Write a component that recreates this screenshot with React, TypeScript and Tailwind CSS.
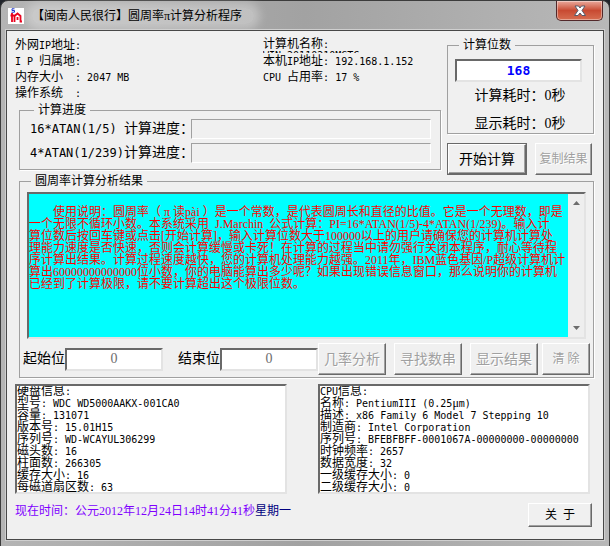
import type { InputHTMLAttributes, ButtonHTMLAttributes, ReactNode } from "react";

const MANUAL = `
　　使用说明：圆周率（ π 读pài ）是一个常数，是代表圆周长和直径的比值。它是一个无理数，即是
一个无限不循环小数。本系统采用  J.Marchin  公式计算：PI=16*ATAN(1/5)-4*ATAN(1/239)。输入计
算位数后按回车键或点击[开始计算]，输入计算位数大于100000以上的用户请确保您的计算机计算处
理能力速度是否快速，否则会计算缓慢或卡死！在计算的过程当中请勿强行关闭本程序，耐心等待程
序计算出结果。计算过程速度越快，您的计算机处理能力越强。2011年，IBM蓝色基因/P超级计算机计
算出60000000000000位小数，你的电脑能算出多少呢？如果出现错误信息窗口，那么说明你的计算机
已经到了计算极限，请不要计算超出这个极限位数。`;

const DISK_INFO = [
  "硬盘信息:",
  "型号: WDC WD5000AAKX-001CA0",
  "容量: 131071",
  "版本号: 15.01H15",
  "序列号: WD-WCAYUL306299",
  "磁头数: 16",
  "柱面数: 266305",
  "缓存大小: 16",
  "每磁道扇区数: 63",
];

const CPU_INFO = [
  "CPU信息:",
  "名称: PentiumIII (0.25μm)",
  "描述: x86 Family 6 Model 7 Stepping 10",
  "制造商: Intel Corporation",
  "序列号: BFEBFBFF-0001067A-00000000-00000000",
  "时钟频率: 2657",
  "数据宽度: 32",
  "一级缓存大小: 0",
  "二级缓存大小: 0",
];

// Latin runs are set half as wide as a Chinese character
function Mixed({ text, large = false }: { text: string; large?: boolean }) {
  return (
    <>
      {text.split(/([\x20-\x7e]+)/).map((part, i) =>
        i % 2 ? (
          <span
            key={i}
            className={
              large
                ? "font-['DejaVu_Sans_Mono',monospace] text-[12px] whitespace-pre"
                : "font-['DejaVu_Sans_Mono',monospace] text-[10px] whitespace-pre"
            }
          >
            {part}
          </span>
        ) : (
          part
        ),
      )}
    </>
  );
}

function Group({ title, className, children }: { title: string; className: string; children: ReactNode }) {
  return (
    <fieldset className={`min-w-0 border border-[#a0a0a0] shadow-[1px_1px_0_#fff] ${className}`}>
      <legend className="ml-1 bg-[#f0f0f0] px-1 leading-[14px]">{title}</legend>
      {children}
    </fieldset>
  );
}

function Button({ className, ...props }: ButtonHTMLAttributes<HTMLButtonElement>) {
  return (
    <button
      type="button"
      className={`shrink-0 border border-t-white border-l-white border-r-[#696969] border-b-[#696969] bg-[#f0f0f0] whitespace-pre shadow-[inset_-1px_-1px_0_#a0a0a0] disabled:text-[#a0a0a0] disabled:text-shadow-[1px_1px_0_#fff] ${className}`}
      {...props}
    />
  );
}

function Field({ className, ...props }: InputHTMLAttributes<HTMLInputElement>) {
  return (
    <input
      className={`min-w-0 border-2 border-t-[#696969] border-l-[#696969] border-r-[#e3e3e3] border-b-[#e3e3e3] bg-white text-center ${className}`}
      {...props}
    />
  );
}

function ProgressRow({ label }: { label: string }) {
  return (
    <div className="flex items-center">
      <span className="w-[161px] shrink-0 text-[14px] leading-5 whitespace-pre">
        <Mixed text={label} large />
      </span>
      <div
        role="progressbar"
        aria-label={label}
        aria-valuenow={0}
        className="h-5 flex-1 border border-t-[#a0a0a0] border-l-[#a0a0a0] border-r-white border-b-white"
      />
    </div>
  );
}

function InfoBox({ lines }: { lines: string[] }) {
  return (
    <ul className="h-[110px] w-[272px] overflow-hidden border-2 border-t-[#696969] border-l-[#696969] border-r-[#e3e3e3] border-b-[#e3e3e3] bg-white">
      {lines.map((line) => (
        <li key={line} className="h-3 leading-[11px] whitespace-pre">
          <Mixed text={line} />
        </li>
      ))}
    </ul>
  );
}

export default function App() {
  return (
    <div className="min-h-screen bg-[#20242a] font-['Liberation_Serif','Noto_Sans_CJK_SC',sans-serif] text-[12px] text-black">
      <div className="flex min-h-screen flex-col rounded-t-lg border border-[#3c3c3c] bg-linear-to-r from-[#b4b4b4] via-[#a2a2a2] to-[#b8b8b8] px-[5px] pb-[6px]">

        {/* Title bar */}
        <header className="flex h-[29px] shrink-0 items-start justify-between">
          <div className="flex items-center pt-[7px] pl-[2px]">
            <svg width="16" height="16" viewBox="0 0 16 16" aria-hidden="true">
              <rect width="16" height="16" fill="#fff" />
              <path d="M4 5v9M2.500 7.500h4M6.500 14V8l3-2.500 3 2.500v5.500h1.500M9.500 9v3" fill="none" stroke="#e8001c" strokeWidth="1.8" />
              <path d="M6.500 .8H4v1.700h2.500V4.200H3.500" fill="none" stroke="#2038d0" />
            </svg>
            <h1 className="ml-2 rounded-full bg-white/30 pr-3 text-[12px] leading-4 shadow-[0_0_8px_6px_rgba(255,255,255,0.3)]">
              【闽南人民很行】圆周率π计算分析程序
            </h1>
          </div>
          <button
            type="button"
            aria-label="关闭"
            className="mr-[1px] flex h-5 w-[47px] items-center justify-center rounded-b-[5px] border border-t-0 border-[#52282a] bg-linear-to-b from-[#e9a99c] via-[#c84a32] to-[#d66d50] shadow-[inset_0_0_0_1px_rgba(255,255,255,0.4)]"
          >
            <svg width="14" height="12" viewBox="0 0 14 12" aria-hidden="true">
              <path d="M2 1h3.500L7 3l1.500-2H12L9 5.500 12.500 10.500H9L7 8l-2 2.500H1.500L5 5.500z" fill="#fff" stroke="#555b6b" />
            </svg>
          </button>
        </header>

        <main className="flex-1 border border-[#484848] bg-[#f0f0f0] pr-[9px] pl-2 shadow-[0_0_0_1px_#cfcfcf]">
          <div className="flex gap-[6px]">
            <div className="min-w-0 flex-1">

              {/* System info */}
              <div className="flex pt-[6px]">
                <ul className="w-[248px] shrink-0 leading-4">
                  {["外网IP地址:", "I P 归属地:", "内存大小  : 2047 MB", "操作系统  :"].map((line) => (
                    <li key={line} className="h-4"><Mixed text={line} /></li>
                  ))}
                </ul>
                <ul className="leading-4 whitespace-nowrap">
                  <li className="h-[14px] leading-[14px]"><Mixed text="计算机名称:" /></li>
                  <li className="h-[2px] overflow-hidden leading-[8px]"><Mixed text="WIN-20110210MGTC" /></li>
                  <li className="h-4"><Mixed text="本机IP地址: 192.168.1.152" /></li>
                  <li className="h-4"><Mixed text="CPU 占用率: 17 %" /></li>
                </ul>
              </div>

              <Group title="计算进度" className="mt-[2px] ml-1 h-[67px] pr-[9px] pl-[10px]">
                <div className="flex flex-col gap-1 pt-[2px]">
                  <ProgressRow label="16*ATAN(1/5) 计算进度：" />
                  <ProgressRow label="4*ATAN(1/239)计算进度：" />
                </div>
              </Group>
            </div>

            {/* Digits */}
            <div className="w-[147px] shrink-0 pt-[7px]">
              <Group title="计算位数" className="h-[96px] pr-2 pl-[7px]">
                <div className="flex flex-col pt-[7px]">
                  <Field
                    aria-label="计算位数"
                    defaultValue="168"
                    className="h-[23px] w-[127px] font-['DejaVu_Sans_Mono',monospace] text-[13px] font-bold text-[#0000ff]"
                  />
                  <p className="mt-1 text-center text-[14px] leading-5">计算耗时：0秒</p>
                  <p className="mt-2 text-center text-[14px] leading-5">显示耗时：0秒</p>
                </div>
              </Group>
              <div className="mt-[9px] flex justify-between pr-[2px]">
                <div className="border border-[#696969]">
                  <Button className="h-[30px] w-[78px] text-[14px]">开始计算</Button>
                </div>
                <Button disabled className="h-8 w-[57px]">复制结果</Button>
              </div>
            </div>
          </div>

          {/* Results */}
          <Group title="圆周率计算分析结果" className="-mt-px ml-1 h-[204px] px-[7px]">
            <div className="mt-1 flex h-[147px] border-2 border-t-[#696969] border-l-[#696969] border-r-[#e3e3e3] border-b-[#e3e3e3]">
              <textarea
                readOnly
                wrap="off"
                aria-label="圆周率计算分析结果"
                value={MANUAL}
                className="min-w-0 flex-1 resize-none overflow-hidden bg-[#00ffff] leading-3 text-[#ff0000]"
              />
              <div className="flex w-4 shrink-0 flex-col items-center justify-between bg-[#eeeeee] py-[7px]" aria-hidden="true">
                <svg width="7" height="4" viewBox="0 0 7 4"><path d="M0 4l3.500-4L7 4z" fill="#6c6c6c" /></svg>
                <svg width="7" height="4" viewBox="0 0 7 4"><path d="M0 0l3.500 4L7 0z" fill="#6c6c6c" /></svg>
              </div>
            </div>
            <div className="-mx-1 mt-1 flex items-center justify-between">
              <label className="flex items-center text-[14px] leading-5 whitespace-nowrap">
                起始位
                <Field disabled defaultValue="0" className="h-[23px] w-[98px] text-[#6d6d6d]" />
              </label>
              <div className="flex items-center">
                <label className="flex items-center text-[14px] leading-5 whitespace-nowrap">
                  结束位
                  <Field disabled defaultValue="0" className="h-[23px] w-[98px] text-[#6d6d6d]" />
                </label>
                <div className="flex gap-2">
                  <Button disabled className="h-8 w-[68px] text-[14px]">几率分析</Button>
                  <Button disabled className="h-8 w-[68px] text-[14px]">寻找数串</Button>
                  <Button disabled className="h-8 w-[68px] text-[14px]">显示结果</Button>
                </div>
                <Button disabled className="ml-1 h-8 w-[48px]">清 除</Button>
              </div>
            </div>
          </Group>

          {/* Hardware */}
          <div className="mt-[6px] flex justify-between pr-1">
            <InfoBox lines={DISK_INFO} />
            <InfoBox lines={CPU_INFO} />
          </div>

          <footer className="mt-[9px] flex items-start justify-between pr-[2px] pb-3">
            <p className="leading-4 text-[#8000ff]">
              现在时间：公元2012年12月24日14时41分41秒<span className="text-[#000080]">星期一</span>
            </p>
            <Button className="h-6 w-[64px]">关  于</Button>
          </footer>
        </main>
      </div>
    </div>
  );
}
